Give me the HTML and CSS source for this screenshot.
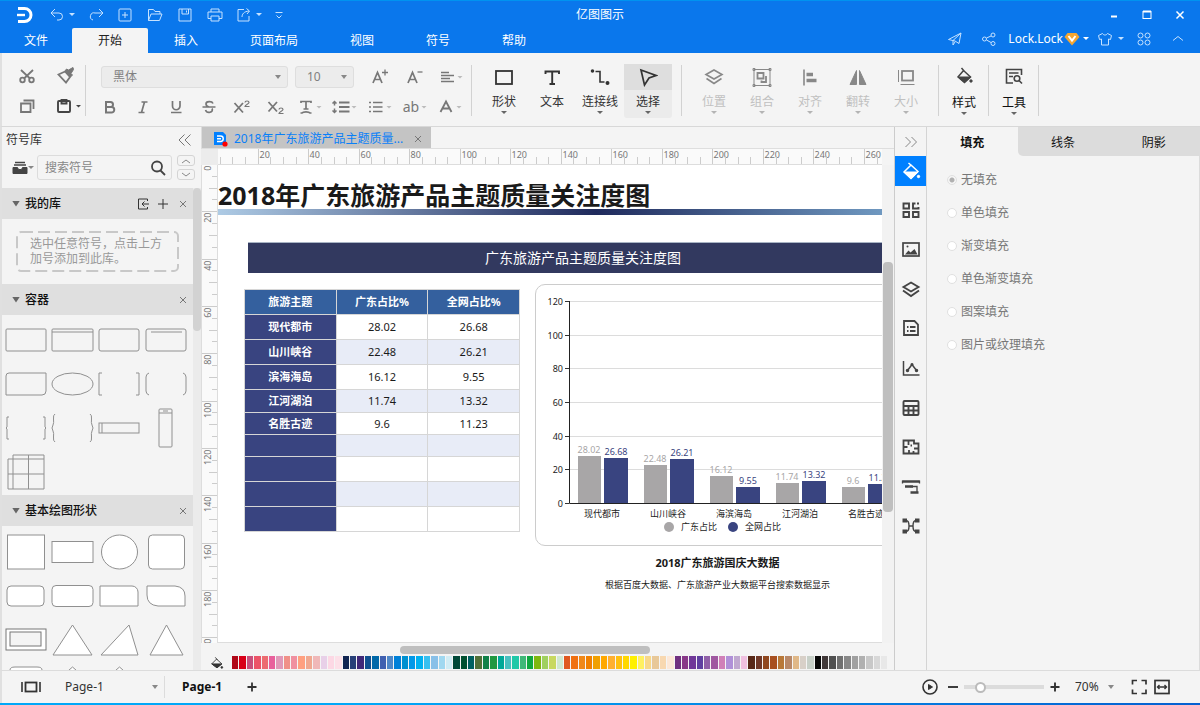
FILE: index.html
```html
<!DOCTYPE html>
<html lang="zh-CN">
<head>
<meta charset="utf-8">
<title>亿图图示</title>
<link rel="stylesheet" href="styles.css">
</head>
<body>
<div class="app">
  <header class="top">
    <div class="titlebar">
      <div class="quick">
        <svg class="logo" viewBox="0 0 16 16"><path d="M1 1.500h6.500a6.500 6.500 0 0 1 0 13H1" fill="none" stroke="#fff" stroke-width="3"/><path d="M0 8h8" stroke="#fff" stroke-width="2.400"/></svg>
        <button class="q q-undo" aria-label="撤销"><svg class="ic" viewBox="0 0 20 20"><path d="M8 4L4 8l4 4M4.500 8H12a3.500 3.500 0 0 1 0 7h-2"/></svg><i class="caret"></i></button>
        <button class="q q-redo" aria-label="重做"><svg class="ic" viewBox="0 0 20 20"><path d="M12 4l4 4-4 4M15.500 8H8a3.500 3.500 0 0 0-2 7"/></svg></button>
        <button class="q" aria-label="新建"><svg class="ic" viewBox="0 0 20 20"><rect x="4" y="4" width="12" height="12" rx="1"/><path d="M10 7v6M7 10h6"/></svg></button>
        <button class="q" aria-label="打开"><svg class="ic" viewBox="0 0 20 20"><path d="M3.500 15.500v-11h5l1.500 2h5v2.500M3.500 15.500h11l2.500-6.500H6z"/></svg></button>
        <button class="q" aria-label="保存"><svg class="ic" viewBox="0 0 20 20"><path d="M4 4h12v12H4zM7 4v5h6.500V4M11.500 5.500v2"/></svg></button>
        <button class="q" aria-label="打印"><svg class="ic" viewBox="0 0 20 20"><path d="M6 7V4h8v3M6 13.500H3V7h14v6.500h-3M6 11h8v5H6z"/></svg></button>
        <button class="q q-undo q-export" aria-label="导出"><svg class="ic" viewBox="0 0 20 20"><path d="M10 4.500H4V16h11v-5M8 12c0-3 2-5.500 7-6M12.500 3.500L15.500 6l-2.500 3"/></svg><i class="caret"></i></button>
        <button class="q q-more" aria-label="自定义"><svg class="ic" viewBox="0 0 20 20"><path d="M6.500 7.500h7M7.500 10.500L10 13l2.500-2.500"/></svg></button>
      </div>
      <h1 class="app-title">亿图图示</h1>
      <div class="winbtns">
        <button aria-label="最小化"><svg class="ic16" viewBox="0 0 16 16"><path d="M5 9.500h6" stroke-width="2"/></svg></button>
        <button aria-label="最大化"><svg class="ic16" viewBox="0 0 16 16"><rect x="4" y="4.500" width="8" height="7"/><path d="M4 4.500h8" stroke-width="2"/></svg></button>
        <button aria-label="关闭"><svg class="ic16" viewBox="0 0 16 16"><path d="M4.500 4.500l7 7M11.500 4.500l-7 7" stroke-width="1.500"/></svg></button>
      </div>
    </div>
    <div class="menubar">
      <nav class="tabs">
        <button class="tab tab-file">文件</button>
        <button class="tab is-active">开始</button>
        <button class="tab">插入</button>
        <button class="tab">页面布局</button>
        <button class="tab">视图</button>
        <button class="tab">符号</button>
        <button class="tab">帮助</button>
      </nav>
      <div class="account">
        <button class="acc" aria-label="发送"><svg class="ic16" viewBox="0 0 16 16"><path d="M1.500 8.500L14 2l-2 10.500-4-2.500zM6 9.500l8-7.500M6 10v4l2-3"/></svg></button>
        <button class="acc acc-share" aria-label="分享"><svg class="ic16" viewBox="0 0 16 16"><circle cx="3.500" cy="8" r="2"/><circle cx="12" cy="4" r="2"/><circle cx="12" cy="12.500" r="2"/><path d="M5.500 7l4.500-2M5.500 9l4.500 2.500"/></svg></button>
        <button class="acc user">Lock.Lock<svg class="gem" viewBox="0 0 16 14"><path d="M3.500 1h9L15.500 5 8 13.500.5 5z" fill="#f4a632"/><path d="M4.500 4L8 8.500 11.500 4" fill="none" stroke="#fff" stroke-width="2"/></svg><i class="caret"></i></button>
        <button class="acc acc-skin" aria-label="皮肤"><svg class="ic16" viewBox="0 0 16 16"><path d="M5.500 2.500L1.500 4.500l1 4L4.500 8v6h7V8l2 .5 1-4-4-2c-1 2-4 2-5 0z"/></svg><i class="caret"></i></button>
        <button class="acc acc-apps" aria-label="应用"><svg class="ic16" viewBox="0 0 16 16"><circle cx="4.500" cy="4.500" r="2.500"/><circle cx="11.500" cy="4.500" r="2.500"/><circle cx="4.500" cy="11.500" r="2.500"/><circle cx="11.500" cy="11.500" r="2.500"/></svg></button>
        <button class="acc acc-fold" aria-label="收起"><svg class="ic16" viewBox="0 0 16 16"><path d="M3 9.500l5-4 5 4"/></svg></button>
      </div>
    </div>
  </header>

  <section class="ribbon">
    <div class="clip">
      <button aria-label="剪切"><svg class="ic" viewBox="0 0 20 20" stroke-width="1.800"><path d="M4 4l9 8.500M16 4l-9 8.500"/><circle cx="5.500" cy="14" r="2.300"/><circle cx="14.500" cy="14" r="2.300"/></svg></button>
      <button aria-label="格式刷"><svg class="ic" viewBox="0 0 20 20"><path d="M2.500 8.500L9 5.500l5 5.500-4 5.500z" stroke-width="1.800"/><path d="M9 5l1.500-2 2 1L17 1.500l.5 2-2.500 4 1.500 1.500-2 2z" fill="currentColor"/></svg></button>
      <button aria-label="复制"><svg class="ic" viewBox="0 0 20 20" stroke-width="1.800"><path d="M4 7.500h9.500V16H4zM6.500 4.500h10V13"/></svg></button>
      <button class="dark paste" aria-label="粘贴"><svg class="ic" viewBox="0 0 20 20" stroke-width="1.900"><rect x="4" y="5" width="12" height="11" rx="1"/><path d="M7.500 4h5v3.500h-5z"/></svg><i class="caret"></i></button>
    </div>
    <i class="sep"></i>
    <div class="fontgroup">
      <div class="frow frow-first">
        <div class="sel sel-font"><select aria-label="字体"><option>黑体</option></select><i class="caret"></i></div>
        <div class="sel sel-size"><select aria-label="字号"><option>10</option></select><i class="caret"></i></div>
        <button class="fb fb-wide" aria-label="增大字号"><svg class="ic" viewBox="0 0 20 20" stroke-width="1.700"><path d="M3 16L7.500 5.500 12 16M4.500 12.500h6"/><path d="M15 2.500v6M12 5.500h6" stroke-width="1.300"/></svg></button>
        <button class="fb fb-wide" aria-label="减小字号"><svg class="ic" viewBox="0 0 20 20" stroke-width="1.700"><path d="M3 16L7.500 5.500 12 16M4.500 12.500h6"/><path d="M12.500 5h5" stroke-width="1.300"/></svg></button>
        <button class="fd" aria-label="对齐方式"><svg class="ic" viewBox="0 0 20 20" stroke-width="1.600"><path d="M4 5.500h8M4 8.500h13M4 11.500h9M4 14.500h13"/></svg><i class="caret"></i></button>
      </div>
      <div class="frow">
        <button class="fb" aria-label="粗体"><svg class="ic" viewBox="0 0 20 20" stroke-width="2"><path d="M6 5h4.500a2.500 2.500 0 0 1 0 5H6zM6 10h5.500a2.500 2.500 0 0 1 0 5.500H6z"/></svg></button>
        <button class="fb" aria-label="斜体"><svg class="ic" viewBox="0 0 20 20" stroke-width="1.700"><path d="M8.500 5h6M5.500 15.500h6M11.500 5l-3 10.500"/></svg></button>
        <button class="fb" aria-label="下划线"><svg class="ic" viewBox="0 0 20 20" stroke-width="1.700"><path d="M6.500 4v5a3.500 3.500 0 0 0 7.500 0V4M5 15.500h10.500"/></svg></button>
        <button class="fb" aria-label="删除线"><svg class="ic" viewBox="0 0 20 20" stroke-width="1.700"><path d="M14 6.500C13 4 7 4 7 7c0 1.500 1.500 2.500 3 3M3.500 10h13M13 11.500c2 4-5 5.500-6.500 1.500"/></svg></button>
        <button class="fb" aria-label="上标"><svg class="ic" viewBox="0 0 20 20" stroke-width="1.800"><path d="M2.500 6l8.500 9.500M11 6l-8.500 9.500"/><path d="M13 5.500c0-2 4-2 4 0 0 1.500-4 2-4 4h4.500" stroke-width="1.200"/></svg></button>
        <button class="fb" aria-label="下标"><svg class="ic" viewBox="0 0 20 20" stroke-width="1.800"><path d="M3.500 5l8.500 9.500M12 5l-8.500 9.500"/><path d="M14 12.500c0-2 4-2 4 0 0 1.500-4 2-4 4h4.500" stroke-width="1.200"/></svg></button>
        <button class="fd" aria-label="文字颜色"><svg class="ic" viewBox="0 0 20 20" stroke-width="1.700"><path d="M5 6V4.500h10V6M10 4.500V12M7.500 12h5M4.500 16h1.500c1-1.500 7-1.500 8 0h1.500"/></svg><i class="caret"></i></button>
        <button class="fd" aria-label="行距"><svg class="ic" viewBox="0 0 20 20" stroke-width="1.500"><path d="M3.500 5v3.500M1.500 6.500l2-2 2 2M3.500 11.500V15M1.500 13.500l2 2 2-2"/><path d="M8 5.500h10.500M8 10h10.500M8 14.500h10.500" stroke-width="1.800"/></svg><i class="caret"></i></button>
        <button class="fd" aria-label="列表"><svg class="ic" viewBox="0 0 20 20" stroke-width="1.700"><path d="M3 5.500h2M3 10h2M3 14.500h2M7 5.500h9.500M7 10h9.500M7 14.500h9.500"/></svg><i class="caret"></i></button>
        <button class="fd" aria-label="字母"><span class="ab">ab</span><i class="caret"></i></button>
        <button class="fd" aria-label="字体颜色"><svg class="ic" viewBox="0 0 20 20" stroke-width="1.800"><path d="M4.500 15L10 4.500 15.500 15M6.500 11.500h7"/></svg><i class="caret"></i></button>
      </div>
    </div>
    <i class="sep"></i>
    <div class="biggroup draw">
      <button class="big"><span class="bi"><svg class="ic" viewBox="0 0 20 20" stroke-width="1.800"><rect x="2" y="4" width="16" height="13"/></svg></span>形状<i class="caret"></i></button>
      <button class="big"><span class="bi"><svg class="ic" viewBox="0 0 20 20" stroke-width="1.900"><path d="M3.500 7V4.500h13.500V7M10.200 4.500v12.500M7.500 17h5.500"/></svg></span>文本</button>
      <button class="big"><span class="bi"><svg class="ic" viewBox="0 0 20 20" stroke-width="1.600"><path d="M5.500 4.500H10V15h4.500"/><circle cx="2.500" cy="4" r="1" fill="currentColor"/><circle cx="17.500" cy="16" r="1.200" fill="currentColor"/></svg></span>连接线<i class="caret"></i></button>
      <button class="big is-on"><span class="bi"><svg class="ic" viewBox="0 0 20 20" stroke-width="1.700"><path d="M3 3l15 5.500-7 2.500-4.500 7z"/></svg></span>选择<i class="caret"></i></button>
    </div>
    <i class="sep"></i>
    <div class="biggroup">
      <button class="big" disabled><span class="bi"><svg class="ic" viewBox="0 0 20 20" stroke-width="1.600"><path d="M10 3l8 4.500-8 4.500-8-4.500zM2.500 11.500l7.500 5 7.500-5"/></svg></span>位置<i class="caret"></i></button>
      <button class="big" disabled><span class="bi"><svg class="ic" viewBox="0 0 20 20"><rect x="2" y="2.500" width="16" height="16"/><path d="M1 1.500h2v2H1zM17 1.500h2v2h-2zM1 17.500h2v2H1zM17 17.500h2v2h-2z"/><path d="M5.500 6h6v5.500h-6zM14 9v6H9.500v-1.500" stroke-width="1.800"/></svg></span>组合<i class="caret"></i></button>
      <button class="big" disabled><span class="bi"><svg class="ic" viewBox="0 0 20 20"><path d="M4 2.500v16" stroke-width="1.600"/><path d="M6.500 7.500H13M6.500 13.500h10" stroke-width="3.500"/></svg></span>对齐<i class="caret"></i></button>
      <button class="big" disabled><span class="bi"><svg class="ic" viewBox="0 0 20 20"><path d="M8.500 3.500v14H2zM11.500 3.500v14H18z" fill="currentColor"/></svg></span>翻转<i class="caret"></i></button>
      <button class="big" disabled><span class="bi"><svg class="ic" viewBox="0 0 20 20"><path d="M2.500 3v12M4.500 17.500h14"/><rect x="6" y="4" width="11" height="9.500" stroke-width="1.800"/></svg></span>大小<i class="caret"></i></button>
    </div>
    <i class="sep"></i>
    <div class="biggroup small"><button class="big"><span class="bi"><svg class="ic" viewBox="0 0 20 20"><path d="M7.500 2l3 3.500M9.500 4.500l7 6.500-6 5.500-6.500-5.500z" stroke-width="1.500"/><path d="M4 11h12.500l-6 5.500z" fill="currentColor"/><circle cx="17" cy="15" r="1.200" fill="currentColor"/></svg></span>样式<i class="caret"></i></button></div>
    <i class="sep"></i>
    <div class="biggroup small"><button class="big"><span class="bi"><svg class="ic" viewBox="0 0 20 20" stroke-width="1.600"><path d="M9 17H2.500V3.500h15V9M5 7h9.500M5 10.500h4"/><circle cx="13" cy="12.500" r="2.800"/><path d="M15 14.500l3 3"/></svg></span>工具<i class="caret"></i></button></div>
    <i class="sep"></i>
  </section>

  <main class="work">
    <aside class="library">
      <div class="lib-head"><h2>符号库</h2><button aria-label="收起"><svg class="ic16" viewBox="0 0 16 16"><path d="M7.500 2.500l-5.500 5.500 5.500 5.500M13.500 2.500L8 8l5.500 5.500"/></svg></button></div>
      <div class="lib-search">
        <button class="drawer" aria-label="库"><svg class="ic16" viewBox="0 0 16 16"><path d="M3 2.500h10M2 5h12" stroke-width="1.400"/><path d="M1 7.500h4.500l1 2h3l1-2H15v6H1z" fill="currentColor"/></svg><i class="caret"></i></button>
        <label class="searchbox"><input type="text" placeholder="搜索符号" aria-label="搜索符号"><svg class="ic16" viewBox="0 0 16 16" stroke-width="1.800"><circle cx="7" cy="6.500" r="5"/><path d="M10.500 10.500l4.500 4.500"/></svg></label>
        <div class="spin"><button aria-label="上一个"><svg viewBox="0 0 10 6"><path d="M1 5l4-3 4 3"/></svg></button><button aria-label="下一个"><svg viewBox="0 0 10 6"><path d="M1 1l4 3 4-3"/></svg></button></div>
      </div>
      <div class="lib-body">
        <div class="lib-list">
          <div class="sec-head"><i class="tri"></i><h3>我的库</h3><button aria-label="导入"><svg class="ic16" viewBox="0 0 16 16"><path d="M12.500 5V3h-9v10h9v-2M14 8H7M9.500 5.500L7 8l2.500 2.500"/></svg></button><button aria-label="添加"><svg class="ic16" viewBox="0 0 16 16"><path d="M8 3v10M3 8h10"/></svg></button><button class="x" aria-label="关闭"><svg class="ic16" viewBox="0 0 16 16"><path d="M5 5l6 6M11 5l-6 6"/></svg></button></div>
          <div class="hint"><svg class="dash"><rect x="1" y="1" rx="4"/></svg><p>选中任意符号，点击上方加号添加到此库。</p></div>
          <div class="sec-head"><i class="tri"></i><h3>容器</h3><button class="x" aria-label="关闭"><svg class="ic16" viewBox="0 0 16 16"><path d="M5 5l6 6M11 5l-6 6"/></svg></button></div>
          <div class="shapes">
            <svg viewBox="0 0 47 44"><rect x="4" y="11" width="40" height="22" rx="1"/></svg>
            <svg viewBox="0 0 47 44"><rect x="3" y="11" width="41" height="22" rx="1"/><path d="M3 14h41"/></svg>
            <svg viewBox="0 0 47 44"><rect x="3" y="11" width="40" height="22" rx="2"/></svg>
            <svg viewBox="0 0 47 44"><rect x="3" y="11" width="40" height="22" rx="2"/><path d="M8 14h31"/></svg>
            <svg viewBox="0 0 47 44"><path d="M7 11h37v18a4 4 0 0 1-4 4H4V14a3 3 0 0 1 3-3z"/></svg>
            <svg viewBox="0 0 47 44"><ellipse cx="23.500" cy="22" rx="20.500" ry="11"/></svg>
            <svg viewBox="0 0 47 44"><path d="M6 11H3v22h3M40 11h3v22h-3"/></svg>
            <svg viewBox="0 0 47 44"><path d="M6 11q-3 1-3 4v14q0 3 3 4M40 11q3 1 3 4v14q0 3-3 4"/></svg>
            <svg viewBox="0 0 47 44"><path d="M7 11H5v10l-1 1 1 1v10h2M41 11h2v10l1 1-1 1v10h-2"/></svg>
            <svg viewBox="0 0 47 44"><path d="M6 8q-2 1-1.500 5t-.5 6l-1 3 1 3q1 2 .5 6t1.500 5M41 8q2 1 1.500 5t.5 6l1 3-1 3q-1 2-.5 6t-1.500 5"/></svg>
            <svg viewBox="0 0 47 44"><rect x="3" y="17" width="40" height="10"/><path d="M6 17v10"/></svg>
            <svg viewBox="0 0 47 44"><rect x="16" y="3" width="13" height="38" rx="1"/><path d="M16 7h13M20 5h5"/></svg>
            <svg viewBox="0 0 47 44"><path d="M11 5h31v34H6V9h36M11 5v34M26.500 5v34M6 24h36" /></svg>
          </div>
          <div class="sec-head"><i class="tri"></i><h3>基本绘图形状</h3><button class="x" aria-label="关闭"><svg class="ic16" viewBox="0 0 16 16"><path d="M5 5l6 6M11 5l-6 6"/></svg></button></div>
          <div class="shapes basic">
            <svg viewBox="0 0 47 44"><rect x="5.500" y="5" width="37" height="34"/></svg>
            <svg viewBox="0 0 47 44"><rect x="3" y="11.500" width="41" height="21"/></svg>
            <svg viewBox="0 0 47 44"><ellipse cx="23.500" cy="22" rx="18" ry="17"/></svg>
            <svg viewBox="0 0 47 44"><rect x="5.500" y="5" width="36" height="34" rx="4"/></svg>
            <svg viewBox="0 0 47 44"><rect x="5" y="12" width="37" height="20" rx="4"/></svg>
            <svg viewBox="0 0 47 44"><rect x="3" y="11.500" width="41" height="21" rx="4"/></svg>
            <svg viewBox="0 0 47 44"><path d="M4 12h32a6 6 0 0 1 6 6v14H4z"/></svg>
            <svg viewBox="0 0 47 44"><path d="M4 12h28q10 1 10 10v10H15Q4 31 4 21z"/></svg>
            <svg viewBox="0 0 47 44"><rect x="4" y="11" width="40" height="21" stroke="#777"/><rect x="8" y="14" width="31" height="14" fill="#f4f4f4" stroke="#777"/></svg>
            <svg viewBox="0 0 47 44"><path d="M23.500 7L43 37H4z"/></svg>
            <svg viewBox="0 0 47 44"><path d="M33 7l9 30H5z"/></svg>
            <svg viewBox="0 0 47 44"><path d="M23.500 7L40 37H7z"/></svg>
            <svg viewBox="0 0 47 44"><path d="M8 40V8q0-3 5-3h22q5 0 5 3v32z"/></svg>
            <svg viewBox="0 0 47 44"><path d="M23.500 5L43 22 23.500 39 4 22z"/></svg>
            <svg viewBox="0 0 47 44"><path d="M23.500 5L43 22 23.500 39 4 22z"/></svg>
          </div>
        </div>
        <div class="lib-scroll"><i></i></div>
      </div>
    </aside>

    <section class="doc">
      <div class="doc-tabs">
        <div class="doc-tab">
          <svg class="doc-icon" viewBox="0 0 16 16"><path d="M1 1h9l3 3v10H1z" fill="#0080ff"/><path d="M4 5h3.500a2.500 2.500 0 0 1 0 5.500H4M4 7.800h4" fill="none" stroke="#fff" stroke-width="1.400"/><circle cx="12" cy="13" r="2.600" fill="#f00"/></svg>
          <a href="#sheet">2018年广东旅游产品主题质量...</a>
          <button class="x" aria-label="关闭"><svg class="ic16" viewBox="0 0 16 16"><path d="M5 5l6 6M11 5l-6 6"/></svg></button>
        </div>
      </div>
      <div class="corner"></div>
      <svg class="ruler ruler-h" id="ruler-h"></svg>
      <div class="gut"></div>
      <svg class="ruler ruler-v" id="ruler-v"></svg>
      <div class="canvas">
        <article class="sheet" id="sheet">
          <h2 class="sheet-title">2018年广东旅游产品主题质量关注度图</h2>
          <div class="sheet-rule"></div>
          <div class="banner">广东旅游产品主题质量关注度图</div>
          <div class="sheet-cols">
            <table class="data">
              <thead><tr><th>旅游主题</th><th>广东占比%</th><th>全网占比%</th></tr></thead>
              <tbody>
                <tr><th>现代都市</th><td>28.02</td><td>26.68</td></tr>
                <tr><th>山川峡谷</th><td>22.48</td><td>26.21</td></tr>
                <tr><th>滨海海岛</th><td>16.12</td><td>9.55</td></tr>
                <tr class="r23"><th>江河湖泊</th><td>11.74</td><td>13.32</td></tr>
                <tr class="r22"><th>名胜古迹</th><td>9.6</td><td>11.23</td></tr>
                <tr class="r22"><th></th><td></td><td></td></tr>
                <tr><th></th><td></td><td></td></tr>
                <tr><th></th><td></td><td></td></tr>
                <tr><th></th><td></td><td></td></tr>
              </tbody>
            </table>
            <div class="chartcol">
              <div class="chart">
                <svg id="chart" viewBox="0 0 362 258" width="362" height="258"></svg>
              </div>
              <h3>2018广东旅游国庆大数据</h3>
              <p>根据百度大数据、广东旅游产业大数据平台搜索数据显示</p>
            </div>
          </div>
        </article>
      </div>
      <div class="vscroll"><i></i></div>
      <div class="hscroll"><i></i></div>
      <div class="palette">
        <svg class="bucket" viewBox="0 0 16 16"><path d="M6 1.500l2.500 3M7.500 3.500l6 5.500-5.500 4.500L2 9z"/><path d="M2 9h11.500L8 13.500z" fill="currentColor"/><circle cx="13.500" cy="13" r="1" fill="currentColor"/></svg>
        <div class="swatches" id="swatches"></div>
      </div>
    </section>

    <nav class="rail">
      <button class="rail-fold" aria-label="展开"><svg class="ic16" viewBox="0 0 16 16"><path d="M2.500 3l5 5-5 5M8.500 3l5 5-5 5"/></svg></button>
      <button class="rail-on" aria-label="填充"><svg class="ic" viewBox="0 0 20 20"><path d="M7.500 2l3.500 3M10 4l7 6.500-7 7-7-6.500z" stroke-width="1.500"/><path d="M3 11h14l-7 6.500z" fill="currentColor"/><circle cx="17.500" cy="15.500" r="1.200" fill="currentColor"/></svg></button>
      <div class="rail-list">
        <button aria-label="符号"><svg class="ic" viewBox="0 0 20 20" stroke-width="1.900"><path d="M2.500 3.500H8V8.500H2.500zM2.500 12H8v5H2.500zM12 12h5.500v5H12zM14.500 3.500H12v5h5.500V7M16 3.500h2"/></svg></button>
        <button aria-label="图片"><svg class="ic" viewBox="0 0 20 20" stroke-width="1.700"><rect x="2" y="4" width="16" height="13"/><path d="M4 15.500l3.500-4 2 2 4-3.500 3 5.500z" fill="currentColor" stroke="none"/><circle cx="6.500" cy="7.500" r="1" fill="currentColor" stroke="none"/></svg></button>
        <button aria-label="图层"><svg class="ic" viewBox="0 0 20 20" stroke-width="1.900"><path d="M10 3.500l7.500 4.500L10 12.500 2.500 8zM2 11.500l8 5.500 8-5.500"/></svg></button>
        <button aria-label="页面"><svg class="ic" viewBox="0 0 20 20" stroke-width="1.800"><path d="M3 3h10.500L17 6.500V17H3zM6 9h1.500M6 13h1.500M9 9h5.500M9 13h5.500"/></svg></button>
        <button aria-label="图表"><svg class="ic" viewBox="0 0 20 20" stroke-width="1.500"><path d="M2.500 3v14H18.500M6.500 12.500l4.500-6 4.500 6"/><circle cx="6.500" cy="12.500" r="1" fill="currentColor"/><circle cx="11" cy="6.500" r=".8" fill="currentColor"/><circle cx="15.500" cy="12.500" r="1" fill="currentColor"/></svg></button>
        <button aria-label="表格"><svg class="ic" viewBox="0 0 20 20" stroke-width="1.900"><rect x="2.500" y="3" width="15" height="14" rx="1"/><path d="M2.500 8h15M2.500 12.500h15M7.500 8v9M12.500 8v9"/></svg></button>
        <button aria-label="平面图"><svg class="ic" viewBox="0 0 20 20" stroke-width="1.800"><path d="M2.500 3.500H13v3h4.500V16.500h-15zM7.500 3.500V8M2.500 10h4M9.500 8.500h1.500M17.500 11.500H13M8 16.500V13M12.500 16.500V14"/></svg></button>
        <button aria-label="甘特图"><svg class="ic" viewBox="0 0 20 20"><path d="M1.500 4.500h17M4 9.500h8M9.500 15.500h8" stroke-width="2.500"/><path d="M1.500 3.500v3M18.500 3.500v3M9 9.500h7V15" stroke-width="1.300"/></svg></button>
        <button aria-label="思维导图"><svg class="ic" viewBox="0 0 20 20"><path d="M4 4.500h1q3 0 3 5.500T5 15.500M16 4.500h-1q-3 0-3 5.500t3 5.500M8 10h4" stroke-width="1.400"/><path d="M1.500 4.500h4.500M14 4.500h4.500M1.500 15.500h4.500M14 15.500h4.500" stroke-width="4"/></svg></button>
      </div>
    </nav>

    <aside class="props">
      <div class="ptabs"><button class="is-active">填充</button><button>线条</button><button>阴影</button></div>
      <div class="radios">
        <label><input type="radio" name="fill" checked>无填充</label>
        <label><input type="radio" name="fill">单色填充</label>
        <label><input type="radio" name="fill">渐变填充</label>
        <label><input type="radio" name="fill">单色渐变填充</label>
        <label><input type="radio" name="fill">图案填充</label>
        <label><input type="radio" name="fill">图片或纹理填充</label>
      </div>
    </aside>
  </main>

  <footer class="status">
    <button class="st-list" aria-label="页面列表"><svg viewBox="0 0 24 16" width="24" height="16"><rect x="6.500" y="3.500" width="11" height="9" stroke-width="1.800"/><path d="M3 3v10M21 3v10" stroke-width="1.600"/></svg></button>
    <div class="sel sel-page"><select aria-label="页面"><option>Page-1</option></select><i class="caret"></i></div>
    <button class="page-tab">Page-1</button>
    <button class="page-add" aria-label="新建页面"><svg class="ic16" viewBox="0 0 16 16" stroke-width="1.800"><path d="M8 3.500v9M3.500 8h9"/></svg></button>
    <div class="zoom">
      <button aria-label="播放"><svg class="ic" viewBox="0 0 20 20"><circle cx="10" cy="10" r="7" stroke-width="1.600"/><path d="M8.500 7.500l4 2.500-4 2.500z" fill="currentColor"/></svg></button>
      <button aria-label="缩小"><svg class="ic16" viewBox="0 0 16 16" stroke-width="1.900"><path d="M3 8h10"/></svg></button>
      <input type="range" min="0" max="100" value="16" aria-label="缩放">
      <button aria-label="放大"><svg class="ic16" viewBox="0 0 16 16" stroke-width="1.900"><path d="M8 3.500v9M3.500 8h9"/></svg></button>
      <div class="sel sel-zoom"><select aria-label="缩放比例"><option>70%</option></select><i class="caret"></i></div>
      <button class="full" aria-label="全屏"><svg class="ic" viewBox="0 0 20 20" stroke-width="1.700"><path d="M3.500 7.500v-4H8M12.500 3.500H17v4M17 12.500v4h-4.500M8 16.500H3.500v-4"/></svg></button>
      <button class="fit" aria-label="适合窗口"><svg class="ic" viewBox="0 0 20 20" stroke-width="1.700"><rect x="3" y="3.500" width="14" height="13"/><path d="M5.500 10h9M7.500 8l-2 2 2 2M12.500 8l2 2-2 2" stroke-width="1.400"/></svg></button>
    </div>
  </footer>
</div>
<script src="script.js"></script>
</body>
</html>
```

FILE: styles.css
```css
* { box-sizing: border-box; }
html, body { height: 100%; }
body {
  margin: 0;
  font-family: "Noto Sans", "Noto Sans CJK SC", sans-serif;
  font-size: 12px;
  line-height: 16px;
  color: #222;
}
h1, h2, h3, p { margin: 0; font-size: 12px; font-weight: 400; }
button, input, select { font: inherit; color: inherit; }
button {
  border: 0; padding: 0; background: none;
  display: flex; align-items: center; justify-content: center;
  white-space: nowrap;
}
select { appearance: none; border: 0; background: none; padding: 0; outline: 0; }
svg { flex: none; stroke: currentColor; fill: none; display: block; }
.ic { width: 20px; height: 20px; }
.ic16 { width: 16px; height: 16px; }
.caret {
  flex: none; width: 6px; height: 3px;
  background: currentColor;
  clip-path: polygon(0 0, 100% 0, 50% 100%);
}
.app {
  height: 100vh; display: flex; flex-direction: column;
  background: linear-gradient(90deg, #00a8f8, #00a8f8 30%, #0560d0);
  padding-bottom: 2px;
}

/* title bar and menu */
.top { background: #0a77ec; color: #fff; border-top: 1px solid #0093f0; height: 53px; flex: none; }
.titlebar { height: 27px; display: grid; grid-template-columns: 1fr auto 1fr; align-items: center; }
.quick { display: flex; align-items: center; padding-left: 17px; color: #c6e2ff; }
.logo { width: 16px; height: 16px; stroke: none; margin-right: 14px; }
.q { width: 30px; }
.q-undo { width: 37px; justify-content: flex-start; }
.q-undo .caret { margin-left: 2px; }
.q-redo { width: 26px; }
.q-export { padding-left: 4px; }
.q-more { width: 24px; }
.app-title { text-align: center; }
.winbtns { display: flex; justify-content: flex-end; padding-right: 4px; }
.winbtns button { width: 33px; height: 24px; }
.menubar { height: 25px; display: flex; justify-content: space-between; }
.tabs { display: flex; }
.tab { padding: 0 26px; height: 25px; }
.tab-file { padding: 0 24px; }
.tab.is-active { background: #f4f4f4; color: #222; border-radius: 2px 2px 0 0; }
.account { display: flex; align-items: center; padding: 0 14px 4px 0; color: #c6e2ff; }
.acc-share { margin-left: 18px; }
.user { color: #fff; margin-left: 11px; }
.gem { width: 16px; height: 14px; stroke: none; margin: 0 3px 0 1px; }
.acc-skin { margin-left: 8px; }
.acc-skin .caret { margin-left: 5px; }
.acc-apps { margin-left: 12px; }
.acc-fold { margin-left: 18px; }

/* ribbon */
.ribbon {
  flex: none; height: 74px; display: flex; color: #777;
  background: #f4f4f4; border-left: 2px solid #e0e0e0; border-bottom: 1px solid #d8d8d8;
}
.sep { width: 1px; height: 51px; margin-top: 12px; background: #d2d2d2; flex: none; }
.clip { display: grid; grid-template-columns: 40px 38px; grid-template-rows: 24px 20px; row-gap: 8px; padding: 11px 0 0 5px; margin-bottom: auto; }
.dark { color: #444; }
.paste { padding-left: 3px; }
.paste .caret { margin-left: 2px; }
.fontgroup { padding: 13px 4px 0 7px; }
.frow { display: flex; align-items: center; height: 20px; }
.frow-first { height: 22px; padding-left: 8px; margin-bottom: 9px; }
.fb { width: 33px; }
.fb-wide { width: 35px; }
.fd { width: 35px; padding: 0 4px 0 5px; justify-content: space-between; }
.fd .caret { background: #bbb; }
.ab { font-size: 14px; width: 20px; text-align: center; }
.sel { display: grid; align-items: center; }
.sel select { grid-area: 1 / 1; width: 100%; }
.sel .caret { grid-area: 1 / 1; width: 6px; height: 4px; justify-self: end; margin-right: 6px; pointer-events: none; background: #888; }
.sel-font, .sel-size { height: 22px; background: #ececec; border: 1px solid #dedede; border-radius: 3px; color: #808080; }
.sel-font { width: 187px; margin-right: 7px; }
.sel-size { width: 59px; margin-right: 8px; }
.sel-font select, .sel-size select { padding-left: 11px; height: 20px; }
.biggroup { display: flex; padding: 11px 8px 0; }
.draw { padding-right: 9px; }
.big { width: 48px; height: 54px; flex-direction: column; justify-content: flex-start; color: #333; }
.bi { width: 100%; height: 26px; display: flex; align-items: center; justify-content: center; margin-bottom: 4px; }
.big .caret { margin-top: 1px; background: #666; }
.is-on { background: #ebebeb; border-radius: 3px; }
.is-on .bi { background: #dedede; }
.big:disabled { color: #c0c0c0; }
.big:disabled .bi { color: #888; }
.big:disabled .caret { background: #b4b4b4; }
.small { padding: 11px 1px 0 2px; }
.small .big { width: 46px; color: #111; }
.small .bi { color: #444; height: 24px; margin-bottom: 7px; }

/* main area */
.work { flex: 1; min-height: 0; display: flex; background: #f4f4f4; border-left: 2px solid #e0e0e0; border-right: 1px solid #dcdcdc; }
.library { width: 199px; flex: none; display: flex; flex-direction: column; }
.lib-head { display: flex; justify-content: space-between; align-items: center; height: 26px; padding: 0 8px 0 4px; color: #333; }
.lib-head button { color: #777; }
.lib-search { display: flex; align-items: center; height: 35px; padding: 0 6px 6px 10px; }
.drawer { width: 25px; flex: none; color: #444; justify-content: flex-start; }
.drawer .caret { background: #888; }
.searchbox { flex: 1; min-width: 0; height: 25px; display: flex; align-items: center; border: 1px solid #dcdcdc; border-radius: 3px; padding: 0 5px 0 7px; color: #444; }
.searchbox input { flex: 1; min-width: 0; border: 0; background: none; padding: 0; outline: 0; }
.searchbox input::placeholder { color: #888; }
.spin { display: flex; flex-direction: column; gap: 3px; margin-left: 5px; flex: none; }
.spin button { width: 18px; height: 11px; border: 1px solid #d4d4d4; border-radius: 3px; color: #888; }
.spin svg { width: 10px; height: 6px; }
.lib-body { flex: 1; min-height: 0; display: flex; }
.lib-list { flex: 1; overflow: hidden; }
.lib-scroll { width: 8px; background: #ebebeb; }
.lib-scroll i { display: block; height: 143px; background: #d2d2d2; border-radius: 4px; }
.sec-head { display: flex; align-items: center; height: 31px; background: #dfdfdf; padding: 0 2px 0 10px; color: #333; }
.sec-head h3 { flex: 1; color: #111; font-weight: 500; }
.sec-head button { margin-left: 4px; }
.sec-head .x { color: #777; }
.tri { width: 8px; height: 6px; margin-right: 5px; background: #666; clip-path: polygon(0 0, 100% 0, 50% 100%); }
.hint { display: grid; margin: 12px 14px; height: 41px; }
.hint p { grid-area: 1 / 1; padding: 5px 14px 0; line-height: 15px; color: #999; }
.dash { grid-area: 1 / 1; width: 163px; height: 41px; }
.dash rect { width: 161px; height: 39px; stroke: #c8c8c8; stroke-width: 2; stroke-dasharray: 12 5; }
.shapes { display: grid; grid-template-columns: repeat(4, 47px); grid-auto-rows: 44px; padding: 3px 0 1px; color: #909090; }
.basic { padding-top: 4px; }
.basic svg { fill: #fff; }

/* document */
.doc {
  flex: 1; min-width: 0; display: grid;
  grid-template-columns: 17px 1fr 12px;
  grid-template-rows: 22px 16px 1fr 12px 15px;
}
.doc-tabs { grid-column: 1 / -1; border-left: 1px solid #ddd; border-bottom: 1px solid #dedede; display: flex; }
.doc-tab { width: 229px; background: #c4c4c4; display: flex; align-items: center; padding: 2px 5px 0 11px; }
.doc-icon { width: 16px; height: 16px; stroke: none; margin-right: 5px; }
.doc-tab a { flex: 1; color: #0a80f8; text-decoration: none; white-space: nowrap; }
.doc-tab .x { color: #777; }
.corner { background: #ececec; }
.ruler { width: 100%; height: 100%; min-height: 0; min-width: 0; overflow: hidden; background: #fafafa; }
.ruler path { stroke: #ccc; }
.ruler text { font-size: 9px; fill: #777; stroke: none; }
.ruler-h { border-bottom: 1px solid #ddd; }
.ruler-v { border-right: 1px solid #ddd; border-left: 1px solid #ddd; }
.canvas { overflow: hidden; background: #fff; min-height: 0; min-width: 0; border-bottom: 1px solid #ddd; }
.vscroll { background: #f2f2f2; padding: 97px 1px 0; }
.vscroll i { display: block; height: 250px; border-radius: 4px; background: #bfbfbf; }
.hscroll { grid-column: 1 / -1; padding: 3px 0 0 199px; }
.hscroll i { display: block; width: 250px; height: 8px; border-radius: 4px; background: #bfbfbf; }
.palette { grid-column: 1 / -1; display: flex; padding: 1px 7px 1px 8px; color: #333; }
.bucket { width: 16px; height: 14px; margin-right: 7px; }
.swatches { flex: 1; display: flex; gap: 1px; }
.swatches i { flex: 1; }

/* drawing page */
.sheet { width: 700px; color: #1a1a1a; padding-top: 12px; }
.sheet-title { font-size: 25px; line-height: 36px; font-weight: 700; white-space: nowrap; margin-bottom: -4px; }
.sheet-rule { height: 6px; background: linear-gradient(90deg, #aecbe5, #1f2a5c 378px, #6f98c0 664px); }
.banner { width: 670px; height: 31px; margin: 27px 0 0 30px; background: #32395f; border-top: 1px solid #a8b4c4; color: #fff; font-size: 14px; line-height: 30px; text-align: center; }
.sheet-cols { display: flex; align-items: flex-start; padding: 11px 0 0 26px; gap: 15px; }
.data { width: 276px; table-layout: fixed; border-collapse: collapse; font-size: 11px; line-height: 14px; margin-top: 5px; text-align: center; flex: none; }
.data th, .data td { border: 1px solid #d6d6d6; padding: 0; height: 25px; }
.data .r23 th { height: 23px; }
.data .r22 th { height: 22px; }
.data .r23 td, .data .r22 td { height: auto; }
.data th { background: #394480; color: #fff; font-weight: 700; }
.data thead th { background: #34609e; }
.data tbody tr:nth-child(even) td { background: #e8ecf7; }
.chartcol { width: 365px; flex: none; text-align: center; }
.chart { border: 1px solid #ccc; border-radius: 10px; height: 262px; }
.chart svg { stroke: none; }
.chart text { font-size: 9px; fill: #222; }
.chartcol h3 { font-size: 11px; font-weight: 700; margin-top: 9px; }
.chartcol p { font-size: 9px; margin-top: 6px; }

/* right rail */
.rail { width: 33px; flex: none; border-left: 1px solid #ccc; border-right: 1px solid #d4d4d4; color: #444; display: flex; flex-direction: column; }
.rail-fold { height: 29px; color: #888; }
.rail-on { height: 30px; background: #0080ff; color: #fff; }
.rail-list { height: 356px; margin-top: 4px; display: flex; flex-direction: column; }
.rail-list button { flex: 1; }
.props { width: 272px; flex: none; }
.ptabs { display: flex; height: 29px; background: #f4f4f4; }
.ptabs button { flex: 1; background: #dcdcdc; color: #111; padding-top: 3px; }
.ptabs .is-active { background: none; font-weight: 700; }
.ptabs .is-active + button { border-radius: 0 0 0 5px; }
.radios { padding: 7px 0 0 20px; }
.radios label { display: flex; align-items: center; height: 33px; color: #777; gap: 4px; }
.radios input { appearance: none; margin: 0; width: 10px; height: 10px; border-radius: 50%; border: 1px solid #e0e0e0; background: #fff; }
.radios input:checked { background: radial-gradient(circle, #b0b0b0 2px, #f6f6f6 3px); }

/* status bar */
.status { flex: none; height: 33px; display: flex; align-items: center; background: #f4f4f4; border-left: 2px solid #e0e0e0; border-top: 1px solid #dcdcdc; color: #333; }
.st-list { margin-left: 17px; width: 24px; }
.sel-page { width: 122px; height: 22px; border-right: 1px solid #dcdcdc; }
.sel-page select { padding-left: 22px; }
.page-tab { font-weight: 700; color: #111; margin-left: 17px; }
.page-add { margin-left: 22px; }
.zoom { margin-left: auto; display: flex; align-items: center; padding-right: 28px; }
.zoom button:nth-of-type(2) { margin-left: 5px; }
.zoom input { appearance: none; width: 80px; height: 12px; margin: 0 3px; background: linear-gradient(#dcdcdc, #dcdcdc) center / 100% 4px no-repeat; }
.zoom input::-webkit-slider-thumb { appearance: none; width: 11px; height: 11px; border-radius: 50%; background: #fff; border: 2px solid #bbb; }
.sel-zoom { width: 52px; margin-left: 12px; }
.sel-zoom .caret { margin-right: 13px; }
.full { margin-left: 2px; }
.fit { margin-left: 3px; }
```

FILE: script.js
```js
const NS = "http://www.w3.org/2000/svg";

function add(parent, tag, attrs, text) {
  const el = document.createElementNS(NS, tag);
  for (const key in attrs) el.setAttribute(key, attrs[key]);
  if (text !== undefined) el.textContent = text;
  parent.appendChild(el);
}

// Rulers: a labelled tick every 20 mm, a short one every 5 mm.
function drawRulers() {
  const rulerH = document.getElementById("ruler-h");
  const rulerV = document.getElementById("ruler-v");
  const width = rulerH.getBoundingClientRect().width;
  const height = rulerV.getBoundingClientRect().height;
  rulerH.replaceChildren();
  rulerV.replaceChildren();
  for (let n = 1; ; n++) {
    const x = Math.round(-10.8 + n * 12.63) + 0.5;
    if (x > width) break;
    const major = n % 4 === 0;
    add(rulerH, "path", { d: `M${x} ${major ? 0 : 8}V16` });
    if (major) add(rulerH, "text", { x: x + 1, y: 9 }, n * 5);
  }
  for (let n = 0; ; n++) {
    const y = Math.round(n * 11.83) - 0.5;
    if (y > height) break;
    const major = n % 4 === 0;
    add(rulerV, "path", { d: `M${major ? 0 : n % 2 ? 10 : 7} ${y}H17` });
    if (major) add(rulerV, "text", { transform: `translate(9 ${y + 1}) rotate(-90)`, "text-anchor": "end" }, n * 5);
  }
}
drawRulers();
window.addEventListener("resize", drawRulers);

// Palette
const colors = (
  "b00818 d80018 c8507c ec5468 ec6c70 e8609c e098b8 f09088 f090a0 ffa080 f0a890 f0b8b8 e8d0e8 fcd8e4 fce0e8 " +
  "102450 284078 402878 105090 0068a8 4060b0 5088c8 0080d8 0090d0 0098e8 00b0f0 38c0f0 88c0e8 a0d8f0 d0ecf4 " +
  "004838 005030 006060 507038 108048 209840 00a898 48c0c0 20c8a8 40b878 10a840 80b810 a0d060 c8d860 d0e8d0 " +
  "e05820 f07010 f08818 f08000 f0a000 ffa800 ffb030 ffc010 ffd800 fff000 fff060 f8d888 e8c898 f8d8b0 fce8d8 " +
  "703080 883888 703898 6040a0 9060a8 a058a0 d080b8 b090d8 c0a8d0 f0c0e0 " +
  "582818 703828 904820 a85020 b87838 b88868 e0b888 d8d0c8 c8d0c8 " +
  "080808 403838 505050 707070 888888 a0a0a0 b0b0b0 c8c8c8 d8d8d8 e8e8e8"
).split(" ");
const swatches = document.getElementById("swatches");
colors.forEach((c) => {
  const s = document.createElement("i");
  s.style.background = "#" + c;
  swatches.appendChild(s);
});

// Bar chart
const chart = document.getElementById("chart");
const rows = [
  ["现代都市", 28.02, 26.68],
  ["山川峡谷", 22.48, 26.21],
  ["海滨海岛", 16.12, 9.55],
  ["江河湖泊", 11.74, 13.32],
  ["名胜古迹", 9.6, 11.23],
];
const base = 218, unit = 1.683;
for (let v = 0; v <= 120; v += 20) {
  const y = Math.round(base - v * unit);
  if (v) add(chart, "path", { d: `M33 ${y + 0.5}H362`, stroke: "#dcdcdc" });
  add(chart, "path", { d: `M29 ${y + 0.5}H33`, stroke: "#333" });
  add(chart, "text", { x: 27, y: y + 4, "text-anchor": "end" }, v);
}
rows.forEach(([name, a, b], i) => {
  const x = 42 + i * 66;
  const ya = Math.round(base - a * unit), yb = Math.round(base - b * unit);
  add(chart, "rect", { x, y: ya, width: 23, height: base - ya, fill: "#a8a6a7" });
  add(chart, "rect", { x: x + 26, y: yb, width: 24, height: base - yb, fill: "#394480" });
  add(chart, "text", { x: x + 11, y: ya - 3, "text-anchor": "middle", style: "fill:#a8a6a7" }, a);
  add(chart, "text", { x: x + 38, y: yb - 3, "text-anchor": "middle", style: "fill:#394480" }, b);
  add(chart, "text", { x: x + 24, y: base + 14, "text-anchor": "middle" }, name);
});
add(chart, "path", { d: "M33.5 16V218.5H362", stroke: "#222", fill: "none" });
add(chart, "circle", { cx: 133, cy: 242, r: 5, fill: "#a8a6a7" });
add(chart, "text", { x: 145, y: 245 }, "广东占比");
add(chart, "circle", { cx: 197, cy: 242, r: 5, fill: "#394480" });
add(chart, "text", { x: 209, y: 245 }, "全网占比");
```
